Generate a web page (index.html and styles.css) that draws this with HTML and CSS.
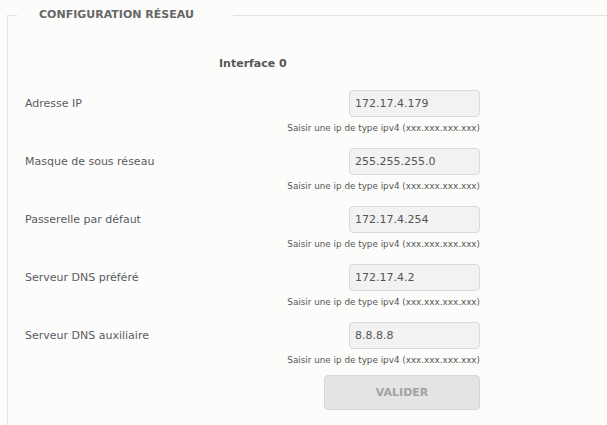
FILE: index.html
```html
<!DOCTYPE html>
<html lang="fr">
<head>
<meta charset="utf-8">
<title>Configuration réseau</title>
<link rel="stylesheet" href="styles.css">
</head>
<body>
<fieldset class="panel">
  <legend class="panel-title">CONFIGURATION RÉSEAU</legend>
  <div class="iface">Interface 0</div>
  <form class="net-form">
    <div class="row">
      <label class="label">Adresse IP</label>
      <div class="field"><input class="ip" type="text" value="172.17.4.179"></div>
      <div class="hint">Saisir une ip de type ipv4 (xxx.xxx.xxx.xxx)</div>
    </div>
    <div class="row">
      <label class="label">Masque de sous réseau</label>
      <div class="field"><input class="ip" type="text" value="255.255.255.0"></div>
      <div class="hint">Saisir une ip de type ipv4 (xxx.xxx.xxx.xxx)</div>
    </div>
    <div class="row">
      <label class="label">Passerelle par défaut</label>
      <div class="field"><input class="ip" type="text" value="172.17.4.254"></div>
      <div class="hint">Saisir une ip de type ipv4 (xxx.xxx.xxx.xxx)</div>
    </div>
    <div class="row">
      <label class="label">Serveur DNS préféré</label>
      <div class="field"><input class="ip" type="text" value="172.17.4.2"></div>
      <div class="hint">Saisir une ip de type ipv4 (xxx.xxx.xxx.xxx)</div>
    </div>
    <div class="row">
      <label class="label">Serveur DNS auxiliaire</label>
      <div class="field"><input class="ip" type="text" value="8.8.8.8"></div>
      <div class="hint">Saisir une ip de type ipv4 (xxx.xxx.xxx.xxx)</div>
    </div>
    <div class="actions">
      <button class="submit" type="button" disabled>VALIDER</button>
    </div>
  </form>
</fieldset>
</body>
</html>
```

FILE: styles.css
```css
html, body {
  margin: 0;
  padding: 0;
  background: #fcfdfb;
}
body {
  font-family: "DejaVu Sans", Verdana, sans-serif;
  color: #5a5a62;
  height: 425px;
  overflow: hidden;
}
.panel {
  margin: 8px 0 0 7px;
  padding: 0 0 0 17px;
  width: 600px;
  box-sizing: border-box;
  border: none;
  border-top: 1px solid #e6e2e2;
  border-left: 1px solid #e6e2e2;
  min-height: 430px;
}
.panel-title {
  margin-left: -8px;
  padding: 0 39px 0 22px;
  font-size: 11px;
  font-weight: bold;
  color: #666;
  line-height: 14px;
}
.iface {
  margin: 34px 0 0 194px;
  font-size: 11px;
  font-weight: bold;
  color: #555;
  line-height: 16px;
}
.net-form {
  margin-top: 18px;
  width: 455px;
}
.row {
  display: grid;
  grid-template-columns: 1fr 131px;
  margin-bottom: 14px;
}
.label {
  font-size: 11px;
  line-height: 27px;
  color: #5a5a62;
}
.ip {
  display: block;
  box-sizing: border-box;
  width: 131px;
  height: 27px;
  margin: 0;
  padding: 0 5px;
  border: 1px solid #dadada;
  border-radius: 4px;
  background: #f2f2f2;
  font-family: "DejaVu Sans", Verdana, sans-serif;
  font-size: 11px;
  color: #555;
  outline: none;
}
.hint {
  grid-column: 1 / 3;
  text-align: right;
  margin-top: 5px;
  font-size: 8.8px;
  line-height: 12px;
  color: #555;
}
.actions {
  display: flex;
  justify-content: flex-end;
  margin-top: -5px;
}
.submit {
  width: 156px;
  height: 35px;
  border: 1px solid #d6d6d6;
  border-radius: 4px;
  background: #e4e4e3;
  font-family: "DejaVu Sans", Verdana, sans-serif;
  font-size: 11px;
  font-weight: bold;
  color: #a2a2a2;
}
```
